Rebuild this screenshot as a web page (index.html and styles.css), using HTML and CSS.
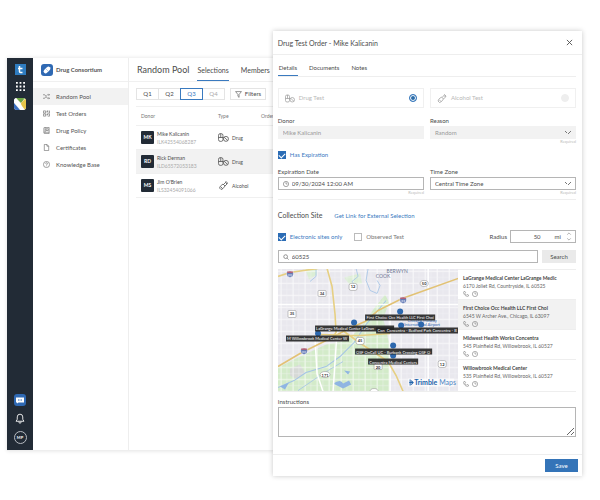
FILE: index.html
```
<!DOCTYPE html>
<html lang="en">
<head>
  <meta charset="UTF-8"/>
  <meta name="viewport" content="width=device-width,initial-scale=1"/>
  <title>Drug Consortium - Random Pool</title>
  <link rel="stylesheet" href="styles.css">
</head>
<body>

<svg class="defs" width="0" height="0" aria-hidden="true">
  <symbol id="i-drug" viewBox="0 0 20 16">
    <g fill="none" stroke="currentColor" stroke-width="1.4">
      <rect x="1" y="1" width="8" height="14" rx="3"/>
      <path d="M1 8h9M5 1v7"/>
      <circle cx="14.500" cy="10.500" r="4.500"/>
      <path d="M11.500 7.500l6 6"/>
    </g>
  </symbol>
  <symbol id="i-alcohol" viewBox="0 0 18 18">
    <g fill="none" stroke="currentColor" stroke-width="1.500" stroke-linejoin="round">
      <path d="M3 10l5-4 4 4-4 5-4 2-3-3z"/>
      <path d="M9 7l4-4 3 3-4 4M13 3l1-2 3 3-1 2M4 12l3 3"/>
    </g>
  </symbol>
  <symbol id="i-phone" viewBox="0 0 16 16">
    <path fill="none" stroke="currentColor" stroke-width="1.300" d="M2 2l3-1 2 4-2 2c1 2 2 3 4 4l2-2 4 2-1 3c-6 2-14-6-12-12z"/>
  </symbol>
  <symbol id="i-clock" viewBox="0 0 16 16">
    <g fill="none" stroke="currentColor" stroke-width="1.300"><circle cx="8" cy="8" r="7"/><path d="M8 3v5h4"/></g>
  </symbol>
  <symbol id="i-shield" viewBox="-4 -4 8 8">
    <path d="M-3-3q1 .5 3-.5 2 1 3 .5 1.500 5-3 6-4.500-1-3-6z" fill="#6279b5" stroke="#fff" stroke-width=".5"/>
    <path d="M-2.800-2.300h5.600" stroke="#cc5860" stroke-width="1.200"/>
    <path d="M-1.500 .500h1M.500 .500h1" stroke="#fff" stroke-width="1.500"/>
  </symbol>
</svg>

<div class="stage">

  <div class="app">
    <aside class="rail">
      <svg class="rail-logo" viewBox="0 0 11 11"><rect width="11" height="11" fill="#2f7cc0"/><path d="M4.500 2v5.500q0 1 1 1h2M3 4.500h4.500" fill="none" stroke="#fff" stroke-width="1.500"/></svg>
      <svg class="rail-icon" viewBox="0 0 10 10" fill="#fff">
        <path d="M0 0h2v2H0zM4 0h2v2H4zM8 0h2v2H8zM0 4h2v2H0zM4 4h2v2H4zM8 4h2v2H8zM0 8h2v2H0zM4 8h2v2H4zM8 8h2v2H8z"/>
      </svg>
      <svg class="rail-app" viewBox="0 0 12 12">
        <clipPath id="sq"><rect width="12" height="12" rx="3"/></clipPath>
        <g clip-path="url(#sq)">
          <rect width="12" height="12" fill="#f4f6f5"/>
          <path d="M2 0h9L7 5z" fill="#6da544"/>
          <path d="M12 0v12H8L7 5z" fill="#e8c64a"/>
          <path d="M0 0h2l9 12H7L0 4z" fill="#fff"/>
          <path d="M0 5l6 7H0z" fill="#3a6fc0"/>
        </g>
      </svg>
      <span class="spacer"></span>
      <svg class="rail-app" viewBox="0 0 12 12"><rect width="12" height="12" rx="3" fill="#2f69b3"/><path d="M2 3.500h8v5H4.500L3 9.500v-1H2z" fill="#fff"/><path d="M4 6h4" stroke="#2f69b3" stroke-dasharray="1 .5"/></svg>
      <svg class="rail-bell" viewBox="0 0 12 14"><path d="M1 10.500h10L9.500 8V5Q9.500 1.500 6 1.500T2.500 5v3zM4.500 11q0 2 1.500 2t1.500-2" fill="none" stroke="#fff" stroke-width="1.100"/></svg>
      <span class="rail-user">MP</span>
    </aside>

    <nav class="menu">
      <div class="brand">
        <svg viewBox="0 0 12 12"><rect width="12" height="12" rx="3" fill="#2f69b3"/><g transform="rotate(-45 6 6)"><rect x="2" y="4" width="8" height="4" rx="2" fill="#fff"/><path d="M6 4v4" stroke="#8db1dc" stroke-width=".6"/></g></svg>
        Drug Consortium
      </div>
      <ul>
        <li><a class="on" href="#"><svg viewBox="0 0 16 16"><path d="M0 4h4l6 8h5M0 12h4l2-3M8 6l2-2h5M13 2l2 2-2 2M13 10l2 2-2 2"/></svg>Random Pool</a></li>
        <li><a href="#"><svg viewBox="0 0 16 16"><path d="M1 2h5v5H1zM1 9h5v5H1zM9 2h2v2H9zM13 2h2v5h-4M9 6v1M9 9h2v2H9zM13 9h2v5h-4M9 13v1"/></svg>Test Orders</a></li>
        <li><a href="#"><svg viewBox="0 0 16 16"><path d="M3 1h11v14H3q-1-1-1-2V2zM2 12h12M5 1v11M7 4h5v4H7z"/></svg>Drug Policy</a></li>
        <li><a href="#"><svg viewBox="0 0 16 16"><path d="M3 1h6l4 4v10H3zM9 1v4h4"/></svg>Certificates</a></li>
        <li><a href="#"><svg viewBox="0 0 16 16"><circle cx="8" cy="8" r="7"/><path d="M6 6q0-2 2-2t2 2q0 1-2 3v1M8 11v1"/></svg>Knowledge Base</a></li>
      </ul>
    </nav>

    <main>
      <header class="pool-head">
        <h1>Random Pool</h1>
        <a class="on" href="#">Selections</a>
        <a href="#">Members</a>
      </header>
      <div class="filters">
        <div class="quarters">
          <button>Q1</button><button>Q2</button><button class="on">Q3</button><button disabled>Q4</button>
        </div>
        <button class="filter-btn"><svg viewBox="0 0 12 12"><path d="M1 1h10L7 6v5l-2-2V6z" fill="none" stroke="currentColor"/></svg>Filters</button>
      </div>
      <table class="donors">
        <thead>
          <tr><th class="c-donor">Donor</th><th class="c-type">Type</th><th>Ordered</th></tr>
        </thead>
        <tbody>
          <tr>
            <td><div class="who"><b>MK</b><span>Mike Kalicanin<small>ILK42554068287</small></span></div></td>
            <td><div class="kind"><svg><use href="#i-drug"/></svg>Drug</div></td><td></td>
          </tr>
          <tr class="on">
            <td><div class="who"><b>RD</b><span>Rick Derman<small>ILD65572053183</small></span></div></td>
            <td><div class="kind"><svg><use href="#i-drug"/></svg>Drug</div></td><td></td>
          </tr>
          <tr>
            <td><div class="who"><b>MS</b><span>Jim O'Brien<small>ILS32454091066</small></span></div></td>
            <td><div class="kind"><svg><use href="#i-alcohol"/></svg>Alcohol</div></td><td></td>
          </tr>
        </tbody>
      </table>
    </main>
  </div>

  <form class="drawer" onsubmit="event.preventDefault()">
    <header class="drawer-head">
      <h2>Drug Test Order - Mike Kalicanin</h2>
      <button type="button" class="close" aria-label="Close"><svg viewBox="0 0 8 8"><path d="M1 1l6 6M7 1L1 7" stroke="currentColor"/></svg></button>
    </header>

    <div class="drawer-body">
      <div class="tabs">
        <a class="on" href="#">Details</a><a href="#">Documents</a><a href="#">Notes</a>
      </div>

      <div class="pair tests">
        <label class="test"><svg><use href="#i-drug"/></svg>Drug Test<input type="radio" name="test" checked></label>
        <label class="test"><svg><use href="#i-alcohol"/></svg>Alcohol Test<input type="radio" name="test" disabled></label>
      </div>

      <div class="pair">
        <div class="field">
          <label for="donor">Donor</label>
          <input id="donor" type="text" value="Mike Kalicanin" disabled>
        </div>
        <div class="field">
          <label for="reason">Reason</label>
          <select id="reason" disabled><option>Random</option></select>
          <small>Required</small>
        </div>
      </div>

      <label class="check blue"><input type="checkbox" checked>Has Expiration</label>

      <div class="pair dates">
        <div class="field">
          <label for="exp">Expiration Date</label>
          <div class="with-icon"><svg><use href="#i-clock"/></svg><input id="exp" type="text" value="09/30/2024 12:00 AM"></div>
          <small>Required</small>
        </div>
        <div class="field">
          <label for="tz">Time Zone</label>
          <select id="tz"><option>Central Time Zone</option></select>
          <small>Required</small>
        </div>
      </div>

      <div class="site-head">
        <h3>Collection Site</h3>
        <a href="#">Get Link for External Selection</a>
      </div>

      <div class="site-opts">
        <label class="check blue"><input type="checkbox" checked>Electronic sites only</label>
        <label class="check"><input type="checkbox">Observed Test</label>
        <label class="radius-label" for="radius">Radius</label>
        <div class="radius">
          <input id="radius" type="text" value="50"><span>mi</span>
          <svg viewBox="0 0 6 10"><path d="M1 3l2-2 2 2M1 7l2 2 2-2" fill="none" stroke="currentColor" stroke-width=".8"/></svg>
        </div>
      </div>

      <div class="search">
        <div class="with-icon">
          <svg viewBox="0 0 16 16"><g fill="none" stroke="currentColor" stroke-width="1.500"><circle cx="7" cy="7" r="5"/><path d="M11 11l4 4"/></g></svg>
          <input type="text" value="60525" aria-label="Zip code">
        </div>
        <button type="button">Search</button>
      </div>

      <div class="sites">
        <svg class="map" viewBox="0 0 180 123" preserveAspectRatio="xMidYMid slice">
          <defs>
            <pattern id="streets" width="12" height="12" patternUnits="userSpaceOnUse">
              <path d="M0 3h12M3 0v12" stroke="#fff" stroke-width="1"/>
              <path d="M0 9h12M9 0v12" stroke="#f6f5f9" stroke-width=".5"/>
            </pattern>
          </defs>
          <rect width="180" height="123" fill="#e9e8ee"/>
          <!-- forest preserves -->
          <path d="M0 99l22-11 26-12 20-4 14-12 14-20 11-14 4 8-6 16 4 16 3 12v49H0z" fill="#d3ebc9"/>
          <path d="M27 0h12v6l-8 5zM66 9l16-4 2 10-12 2z" fill="#dceed5"/>
          <path d="M12 100l10-4 5 8-8 7-7-4z" fill="#d6d9d6"/>
          <rect width="180" height="123" fill="url(#streets)" opacity=".75"/>
          <!-- water -->
          <g fill="none" stroke="#a3c3e6">
            <path d="M0 119l16-7 12-8 20-6 14-10 14-14 12-18 20-24"/>
            <path d="M38 0v8l-6 5M78 0l2 8-6 5 4 6M90 0l-2 12 4 10 7 3 3-8-3-5M20 122l25-17 20-12" stroke-width=".8"/>
          </g>
          <path d="M55 115q8-5 10 0l6-3 2 4-8 4zM66 102l6 1-2 3zM2 118l9-4-4 7z" fill="#8fb5e2"/>
          <!-- highways -->
          <g fill="none" stroke="#fff" stroke-width="1.500">
            <path d="M37 70l2 35 6 18M112 0v123M150 0v123M0 36h180M59 63l-4 60"/>
          </g>
          <g fill="none" stroke="#e6cf82" stroke-width="1.600">
            <path d="M49 0l5 18 3 28 1 18-6 8"/>
            <path d="M0 98l22-13 24-12 25-13 16-7 13-11 24-12 56-20" stroke="#e2c274"/>
            <path d="M0 8l12-4L40 0M40 66l42 1 30-2M66 63l18 13 26 17 8 14 7 16"/>
          </g>

          <g class="place">
            <text x="119" y="5">BERWYN</text><text x="105" y="10">COOK</text>
            <text class="airport" x="144" y="54">Chicago Midway</text><text class="airport" x="144" y="58">International Airport</text>
          </g>
          <use href="#i-shield" x="8" y="2" width="8" height="8"/>
          <use href="#i-shield" x="121" y="28" width="8" height="8"/>
          <use href="#i-shield" x="22" y="79" width="8" height="8"/>
          <g class="route">
            <rect x="40" y="22" width="8" height="6" rx="1"/><text x="44" y="27">34</text>
            <rect x="71" y="15" width="8" height="7" rx="2"/><text x="75" y="20">12</text>
            <ellipse cx="146" cy="15" rx="4" ry="3"/><text x="146" y="17">50</text>
            <rect x="10" y="42" width="8" height="7" rx="1"/><text x="14" y="47">35</text>
            <rect x="78" y="69" width="8" height="7" rx="2"/><text x="82" y="74">45</text>
            <ellipse cx="47" cy="106" rx="5" ry="3"/><text x="47" y="108">171</text>
            <rect x="96" y="94" width="8" height="7" rx="1"/><text x="100" y="100">20</text>
            <rect x="160" y="92" width="8" height="7" rx="2"/><text x="164" y="97">12</text>
            <ellipse cx="96" cy="123" rx="4" ry="3"/>
          </g>
          <g fill="#2d68ae">
            <circle cx="122" cy="43" r="3"/><circle cx="76" cy="54" r="3"/><circle cx="123" cy="57" r="3"/><circle cx="143" cy="56" r="3"/>
            <circle cx="115" cy="77" r="3"/><circle cx="115" cy="87" r="3"/><circle cx="40" cy="65" r="3"/>
          </g>
          <g class="tag">
            <rect x="87" y="46" width="70" height="6"/><text x="122" y="51">First Choice Occ Health LLC First Choi</text>
            <rect x="37" y="57" width="79" height="6"/><text x="67" y="62">LaGrange Medical Center LaGran</text>
            <rect x="98" y="59" width="82" height="6"/><text x="139" y="64">Con&nbsp; Concentra - Bedford Park Concentra - B</text>
            <rect x="8" y="67" width="63" height="6"/><text x="39" y="72">M Willowbrook Medical Center W</text>
            <rect x="77" y="80" width="77" height="6"/><text x="115" y="85">OSF OnCall UC - Burbank Crossing OSF O</text>
            <rect x="90" y="90" width="50" height="6"/><text x="115" y="95">Concentra Medical Centers</text>
          </g>
          <rect x="130" y="110" width="46" height="8" fill="#fff" opacity=".7"/>
          <path d="M132 111v6M131 114h4M133 112l2 2-2 2" fill="none" stroke="#2264ab" stroke-width="1"/>
          <text class="trimble" x="136" y="116"><tspan>Trimble</tspan> Maps</text>
        </svg>

        <ul class="site-list">
          <li><b>LaGrange Medical Center LaGrange Medic</b>6170 Joliet Rd, Countryside, IL 60525<i><svg><use href="#i-phone"/></svg><svg><use href="#i-clock"/></svg></i></li>
          <li class="on"><b>First Choice Occ Health LLC First Choi</b>6545 W Archer Ave., Chicago, IL 63097<i><svg><use href="#i-phone"/></svg><svg><use href="#i-clock"/></svg></i></li>
          <li><b>Midwest Health Works Concentra</b>545 Plainfield Rd, Willowbrook, IL 60527<i><svg><use href="#i-phone"/></svg><svg><use href="#i-clock"/></svg></i></li>
          <li><b>Willowbrook Medical Center</b>535 Plainfield Rd, Willowbrook, IL 60527<i><svg><use href="#i-phone"/></svg><svg><use href="#i-clock"/></svg></i></li>
        </ul>
      </div>

      <div class="field notes">
        <label for="notes">Instructions</label>
        <textarea id="notes"></textarea>
      </div>
    </div>

    <footer><button class="save">Save</button></footer>
  </form>

</div>

</body>
</html>
```

FILE: styles.css
```
* { box-sizing:border-box; }
body {
  margin:0; background:#fff; color:#4c4c4c;
  font:6px/8px Lato, "Open Sans", sans-serif;
}
h1, h2, h3, ul { margin:0; padding:0; font-weight:normal; list-style:none; }
a { color:inherit; text-decoration:none; }
button, input, select, textarea { font:inherit; color:inherit; margin:0; border-radius:0; }
button { padding:0; background:#fff; border:1px solid #e4e4e4; }
svg { display:block; flex:none; }
.defs { position:absolute; }

.stage { position:relative; padding:58px 24px 50px 7px; }

/* App window behind the drawer */
.app {
  display:flex; min-height:393px; overflow:hidden;
  border-bottom:1px solid #eee;
  box-shadow:0 0 4px rgba(0,0,0,0.12);
}
.rail {
  width:26px; padding:6px 0; background:#222b36;
  display:flex; flex-direction:column; align-items:center; gap:7px;
}
.rail-logo { width:11px; height:11px; }
.rail-icon { width:9px; height:9px; }
.rail-app { width:12px; height:12px; }
.rail-bell { width:10px; height:11px; }
.rail-user {
  width:13px; height:13px; border:1px solid #b8bcc2; border-radius:50%;
  color:#fff; font-size:4px; line-height:11px; font-weight:bold; text-align:center;
}
.spacer { flex:1; }

.menu { width:96px; border-right:1px solid #eee; color:#555; }
.brand {
  height:24px; padding-left:8px; border-bottom:1px solid #f0f0f0;
  display:flex; align-items:center; gap:3px; font-weight:bold;
}
.brand svg { width:12px; height:12px; }
.menu ul { padding-top:6px; }
.menu li a { display:flex; align-items:center; gap:6px; height:17px; padding-left:10px; }
.menu li a.on { background:#f2f2f2; }
.menu li svg { width:7px; height:7px; fill:none; stroke:#666; stroke-width:1.4; }

main { flex:1; white-space:nowrap; }
.pool-head { display:flex; height:24px; border-bottom:1px solid #f0f0f0; padding-left:8px; line-height:24px; font-size:7px; gap:12px; }
.pool-head h1 { font-size:9px; margin-right:-4px; }
.pool-head .on { border-bottom:1px solid #3a7abf; }
.filters { display:flex; gap:5px; padding:6px 7px; }
.quarters { display:flex; }
.quarters button { width:23px; height:12px; margin-right:-1px; }
.quarters button:last-child { margin-right:0; }
.quarters .on { border-color:#3a7abf; color:#3a7abf; position:relative; }
.quarters button:disabled { color:#aaa; }
.filter-btn { width:36px; height:12px; display:flex; align-items:center; justify-content:center; gap:3px; }
.filter-btn svg { width:7px; height:7px; }

.donors { width:calc(100% - 7px); margin-left:7px; border-collapse:collapse; table-layout:fixed; }
.donors th { height:19px; padding:0; text-align:left; font-weight:normal; font-size:5px; color:#777; border-top:1px solid #f0f0f0; }
.donors th.c-donor { width:82px; padding-left:5px; }
.donors th.c-type { width:43px; }
.donors td { height:24px; padding:0; }
.donors tr { border-bottom:1px solid #f0f0f0; }
.donors tr.on { background:#f2f2f2; }
.who { display:flex; align-items:center; gap:3px; padding-left:5px; font-size:5px; }
.who b { width:13px; height:13px; border-radius:1px; background:#222b36; color:#fff; line-height:13px; text-align:center; }
.who small { display:block; font-size:5px; color:#aaa; }
.kind { display:flex; align-items:center; gap:3px; font-size:5px; }
.kind svg { width:11px; height:9px; }

/* Order drawer */
.drawer {
  position:absolute; top:31px; right:18px; width:calc(53.2% - 10px);
  background:#fff; box-shadow:0 0 5px rgba(0,0,0,0.22);
}
.drawer-head {
  display:flex; justify-content:space-between; align-items:center;
  height:24px; padding:0 9px 0 5px; border-bottom:1px solid #eee;
}
.drawer-head h2 { font-size:7px; }
.close { border:0; }
.close svg { width:7px; height:7px; }
.drawer-body { padding:6px 6px 17px 5px; }

.tabs { display:flex; gap:10px; border-bottom:1px solid #eee; }
.tabs a { height:15px; line-height:14px; padding:0 1px; }
.tabs .on { border-bottom:1px solid #3a7abf; }

.pair { display:grid; grid-template-columns:1fr 1fr; gap:6px; }
.tests { padding:11px 0 9px; }
.test { display:flex; align-items:center; gap:4px; height:20px; padding:0 6px; border:1px solid #f0f0f0; color:#b8b8b8; }
.test svg { width:10px; height:9px; color:#999; }
.test input {
  appearance:none; width:8px; height:8px; margin-left:auto; border-radius:50%;
  border:1px solid #3a7abf; background:#2b6ca8; box-shadow:inset 0 0 0 1px #fff;
}
.test input:disabled { border-color:#eee; background:#eee; box-shadow:none; }

.field label { display:block; height:9px; }
.field input, .field select, .search input { width:100%; height:13px; padding:0 4px; border:1px solid #b5b5b5; background:#fff; }
.field select {
  display:block; appearance:none;
  background:linear-gradient(45deg, transparent 50%, #777 50% 66%, transparent 66%) right 7px center/3px 3px no-repeat,
    linear-gradient(-45deg, transparent 50%, #777 50% 66%, transparent 66%) right 4px center/3px 3px no-repeat, #fff;
}
.field input:disabled, .field select:disabled { border-color:#f2f2f2; background-color:#f2f2f2; color:#999; opacity:1; }
.field input { display:block; }
.field small { display:block; height:6px; line-height:6px; font-size:4px; color:#bbb; text-align:right; }
.field .with-icon, .search .with-icon { display:flex; align-items:center; border:1px solid #b5b5b5; height:13px; padding-left:4px; background:#fff; }
.with-icon svg { width:6px; height:6px; }
.field .with-icon input, .search .with-icon input { border:0; height:11px; padding:0 3px; }

.check { display:flex; align-items:center; gap:4px; color:#777; }
.check.blue { color:#3a7abf; }
.check input { appearance:none; width:8px; height:8px; border:1px solid #bbb; }
.check input:checked { border-color:#2b6cb5; background:#2b6cb5; display:grid; place-items:center; }
.check input:checked::after { content:""; width:5px; height:3px; border:solid #fff; border-width:0 0 1px 1px; transform:rotate(-45deg); }
.drawer-body > .check { margin-top:6px; }
.dates { margin-top:9px; padding-bottom:3px; border-bottom:1px solid #eee; }

.site-head { display:flex; align-items:center; gap:12px; padding-top:11px; }
.site-head h3 { font-size:7px; line-height:9px; }
.site-head a { color:#3a7abf; }
.site-opts { display:flex; align-items:center; gap:12px; margin-top:10px; }
.radius-label { margin-left:auto; margin-right:-9px; }
.radius { display:flex; align-items:center; width:66px; height:13px; border:1px solid #b5b5b5; padding-right:3px; }
.radius input { flex:1; min-width:0; border:0; padding:0; height:11px; text-align:right; margin-right:14px; }
.radius svg { width:6px; height:9px; margin-left:5px; color:#999; }

.search { display:flex; gap:4px; margin-top:7px; }
.search .with-icon { flex:1; }
.search button { width:34px; background:#eaeaea; border:0; }

.sites { display:flex; margin-top:6px; height:123px; border-bottom:1px solid #eee; }
.map { flex:1; min-width:0; height:122px; font-size:4px; text-anchor:middle; }
.place { fill:#6f7895; font-size:5px; }
.place .airport { fill:#2b5fae; font-size:4px; }
.route rect, .route ellipse { fill:#fff; stroke:#888; stroke-width:.5; }
.route text { fill:#333; font-weight:bold; }
.tag rect { fill:#222; opacity:.9; }
.tag text { fill:#fff; }
.trimble { font-size:7px; fill:#4f86c4; text-anchor:start; }
.trimble tspan { font-weight:bold; fill:#2264ab; }

.site-list { width:118px; overflow-y:scroll; border-top:1px solid #eee; font-size:5px; line-height:8px; color:#666; white-space:nowrap; }
.site-list::-webkit-scrollbar { width:3px; }
.site-list::-webkit-scrollbar-thumb { background:#d6d6d6; }
.site-list li { height:30px; padding:4px 0 0 5px; border-bottom:1px solid #eee; overflow:hidden; }
.site-list li:last-child { height:32px; }
.site-list li.on { background:#f2f2f2; }
.site-list b { display:block; font-weight:bold; color:#444; }
.site-list i { display:flex; gap:3px; padding-top:1px; }
.site-list i svg { width:6px; height:6px; }

.notes { margin-top:6px; }
.notes textarea { display:block; width:100%; height:30px; border:1px solid #b5b5b5; }
footer { display:flex; justify-content:flex-end; padding:4px; border-top:1px solid #eee; }
.save { width:33px; height:13px; background:#3474b8; border:0; color:#fff; }
```
